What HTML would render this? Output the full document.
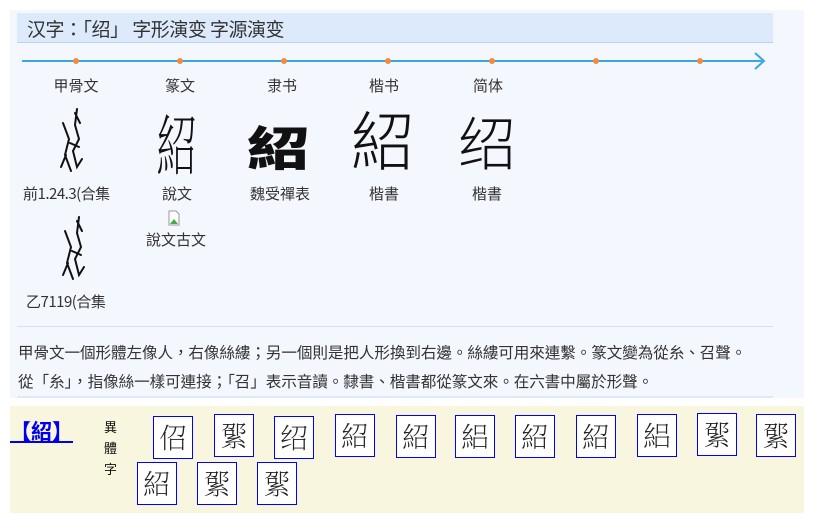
<!DOCTYPE html>
<html><head><meta charset="utf-8"><style>
body{margin:0;width:814px;height:523px;background:#fff;position:relative;overflow:hidden;font-family:"Noto Sans CJK TC","Liberation Sans",sans-serif;color:#333}
.a{position:absolute}
.panel{left:10px;top:10px;width:794px;height:388px;background:#f4f7fd}
.hdr{left:17px;top:13px;width:756px;height:30px;background:#dceafb;border-bottom:1px solid #b9d3f3;font-size:19px;line-height:31px;color:#333;padding-left:10px;box-sizing:border-box;letter-spacing:-0.5px}
.lbl{font-size:15px;line-height:18px;color:#333;text-align:center;width:80px;white-space:nowrap}
.big{font-size:60px;line-height:60px;text-align:center;width:80px;color:#111}
.txt{font-size:15.6px;color:#333;left:18px;width:790px;white-space:nowrap;letter-spacing:-0.1px}
.yl{left:10px;top:406px;width:794px;height:107px;background:#f8f6df}
.bx{position:absolute;width:38px;height:41px;border:1px solid #00f;background:#fff;font-family:"Noto Serif CJK SC","WenQuanYi Zen Hei",serif;font-size:28px;line-height:40px;text-align:center;color:#222;font-weight:200}
</style></head><body>
<div class="a panel"></div>
<div class="a hdr">汉字：「绍」 字形演变 字源演变</div>
<svg class="a" style="left:20px;top:50px" width="750" height="24">
<line x1="2" y1="11" x2="742" y2="11" stroke="#3aa8e0" stroke-width="2"/>
<polyline points="735,3 744,11 735,19" fill="none" stroke="#3aa8e0" stroke-width="2"/>
<g fill="#f58a3a"><circle cx="56" cy="11" r="3"/><circle cx="160" cy="11" r="3"/><circle cx="264" cy="11" r="3"/><circle cx="368" cy="11" r="3"/><circle cx="472" cy="11" r="3"/><circle cx="576" cy="11" r="3"/><circle cx="680" cy="11" r="3"/></g>
</svg>
<div class="a lbl" style="left:36px;top:77px">甲骨文</div>
<div class="a lbl" style="left:140px;top:77px">篆文</div>
<div class="a lbl" style="left:242px;top:77px">隶书</div>
<div class="a lbl" style="left:344px;top:77px">楷书</div>
<div class="a lbl" style="left:448px;top:77px">简体</div>
<svg class="a" style="left:55px;top:105px" width="40" height="180" fill="none" stroke="#111" stroke-width="2" stroke-linecap="round">
<path d="M8 18 L14 34 L10 50 L16 66 M22 4 L20 20 L24 34 L18 46 L22 62 L27 54 M20 8 L25 18 M15 38 L24 42 M11 50 L6 62"/>
<path transform="translate(2,108)" d="M8 18 L14 34 L10 50 L16 66 M22 4 L20 20 L24 34 L18 46 L22 62 L27 54 M20 8 L25 18 M15 38 L24 42 M11 50 L6 62"/>
</svg>
<div class="a big" style="left:137px;top:112px;font-family:'Noto Serif CJK SC',serif;font-weight:200;font-size:52px;transform:scaleX(0.8) scaleY(1.3)">紹</div>
<div class="a big" style="left:238px;top:115px;font-weight:900;font-family:'Noto Sans CJK TC',sans-serif;font-size:62px;transform:scaleY(0.75)">紹</div>
<div class="a big" style="left:343px;top:108px;font-family:'Noto Sans CJK TC',sans-serif;font-weight:300;font-size:64px">紹</div>
<div class="a big" style="left:447px;top:110px;font-family:'Noto Sans CJK SC',sans-serif;font-weight:300;font-size:58px">绍</div>
<div class="a lbl" style="top:185px;width:110px;text-align:left;left:23px;letter-spacing:-0.5px">前1.24.3(合集</div>
<div class="a lbl" style="left:137px;top:185px">說文</div>
<div class="a lbl" style="left:240px;top:185px">魏受禪表</div>
<div class="a lbl" style="left:344px;top:185px">楷書</div>
<div class="a lbl" style="left:447px;top:185px">楷書</div>
<svg class="a" style="left:168px;top:210px" width="12" height="16"><path d="M1 1 H8 L11 4 V15 H1 Z" fill="#fff" stroke="#999"/><path d="M2 14 L6 9 L10 14Z" fill="#4a4"/></svg>
<div class="a lbl" style="left:136px;top:231px">說文古文</div>
<div class="a lbl" style="left:26px;top:293px;text-align:left;width:110px;letter-spacing:-0.5px">乙7119(合集</div>
<div class="a" style="left:17px;top:326px;width:756px;height:1px;background:#dde"></div>
<div class="a txt" style="top:341px">甲骨文一個形體左像人，右像絲縷；另一個則是把人形換到右邊。絲縷可用來連繫。篆文變為從糸、召聲。</div>
<div class="a txt" style="top:370px">從「糸」，指像絲一樣可連接；「召」表示音讀。隸書、楷書都從篆文來。在六書中屬於形聲。</div>
<div class="a" style="left:17px;top:396px;width:756px;height:2px;background:#dceafb"></div>
<div class="a yl"></div>
<div class="a" style="left:10px;top:416px;font-size:21px;font-weight:bold;color:#00e;text-decoration:underline;font-family:'Noto Sans CJK TC',sans-serif">【紹】</div>
<div class="a" style="left:104px;top:416px;font-size:13px;line-height:21px;width:14px;color:#111">異<br>體<br>字</div>
<div class="bx" style="left:153px;top:416px">佋</div>
<div class="bx" style="left:214px;top:414px">綤</div>
<div class="bx" style="left:274px;top:416px">绍</div>
<div class="bx" style="left:335px;top:414px">紹</div>
<div class="bx" style="left:396px;top:415px">紹</div>
<div class="bx" style="left:455px;top:415px">絽</div>
<div class="bx" style="left:515px;top:415px">紹</div>
<div class="bx" style="left:576px;top:415px">紹</div>
<div class="bx" style="left:637px;top:414px">絽</div>
<div class="bx" style="left:697px;top:413px">綤</div>
<div class="bx" style="left:756px;top:414px">綤</div>
<div class="bx" style="left:137px;top:462px">紹</div>
<div class="bx" style="left:197px;top:462px">綤</div>
<div class="bx" style="left:257px;top:462px">綤</div>
</body></html>
